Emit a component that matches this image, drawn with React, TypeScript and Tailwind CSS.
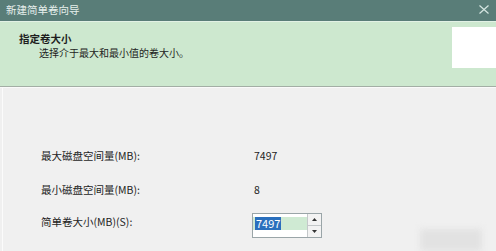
const font = '"Noto Sans CJK SC", "Liberation Sans", sans-serif'

function SpinBox() {
  return (
    <div className="flex h-[25px] w-[70px] border border-[#9aa5a8] bg-white">
      <div className="relative flex-1">
        <div className="absolute left-0 right-0 top-[3px] h-[13px] bg-[#cfead3]" />
        <span className="relative ml-[2px] mt-[3px] inline-block h-[13px] bg-[#2a6fbd] px-[1px] text-[11px] leading-[13px] text-white">
          7497
        </span>
      </div>
      <div className="flex w-[14px] flex-col border-l border-[#c4c8ca] bg-[#f3f3f3]">
        <div className="flex flex-1 items-center justify-center border-b border-[#c4c8ca]">
          <svg width="5" height="3" viewBox="0 0 5 3">
            <path d="M0 3 L2.5 0 L5 3 Z" fill="#333" />
          </svg>
        </div>
        <div className="flex flex-1 items-center justify-center">
          <svg width="5" height="3" viewBox="0 0 5 3">
            <path d="M0 0 L2.5 3 L5 0 Z" fill="#333" />
          </svg>
        </div>
      </div>
    </div>
  )
}

export default function App() {
  return (
    <div
      className="relative h-[251px] w-[496px] overflow-hidden bg-[#f0f0f0] text-[#1e1e1e]"
      style={{ fontFamily: font }}
    >
      {/* 标题栏 */}
      <div className="flex h-[21px] items-center justify-between bg-[#597d78] pl-[6px] pr-[7px]">
        <span className="text-[10.5px] leading-none text-[#e6efec]">新建简单卷向导</span>
        <svg width="10" height="9" viewBox="0 0 10 9" className="-mt-[3px]">
          <path d="M0.5 0.5 L9.5 8.5 M9.5 0.5 L0.5 8.5" stroke="#d6e6e2" strokeWidth="1.2" />
        </svg>
      </div>
      <div className="h-[1px] bg-[#e2f1e5]" />

      {/* 页眉 */}
      <div className="flex h-[64px] justify-between bg-[#cde8cf]">
        <div className="pl-[19px] pt-[9px]">
          <div className="text-[10.5px] font-bold leading-[15px]">指定卷大小</div>
          <div className="pl-[20px] text-[10px] leading-[14px]">选择介于最大和最小值的卷大小。</div>
        </div>
        <div className="mt-[5px] h-[41px] w-[44px] bg-white" />
      </div>
      <div className="h-[1px] bg-[#a3aea5]" />
      <div className="h-[1px] bg-[#fafafa]" />

      {/* 内容 */}
      <div className="ml-[2px] flex h-[163px] flex-col border-l border-[#fbfbfb] pl-[38px] pt-[60px] text-[10.5px]">
        <div className="flex h-[16px] items-center">
          <span className="w-[213px]">最大磁盘空间量(MB):</span>
          <span>7497</span>
        </div>
        <div className="mt-[18px] flex h-[16px] items-center">
          <span className="w-[213px]">最小磁盘空间量(MB):</span>
          <span>8</span>
        </div>
        <div className="mt-[15px] flex items-start">
          <span className="mt-[1px] w-[211px] leading-[15px]">简单卷大小(MB)(S):</span>
          <SpinBox />
        </div>
      </div>

      {/* 水印 */}
      <div className="absolute bottom-0 left-[420px] h-[22px] w-[62px] bg-[#e2e2e2] blur-[3px]" />
    </div>
  )
}
